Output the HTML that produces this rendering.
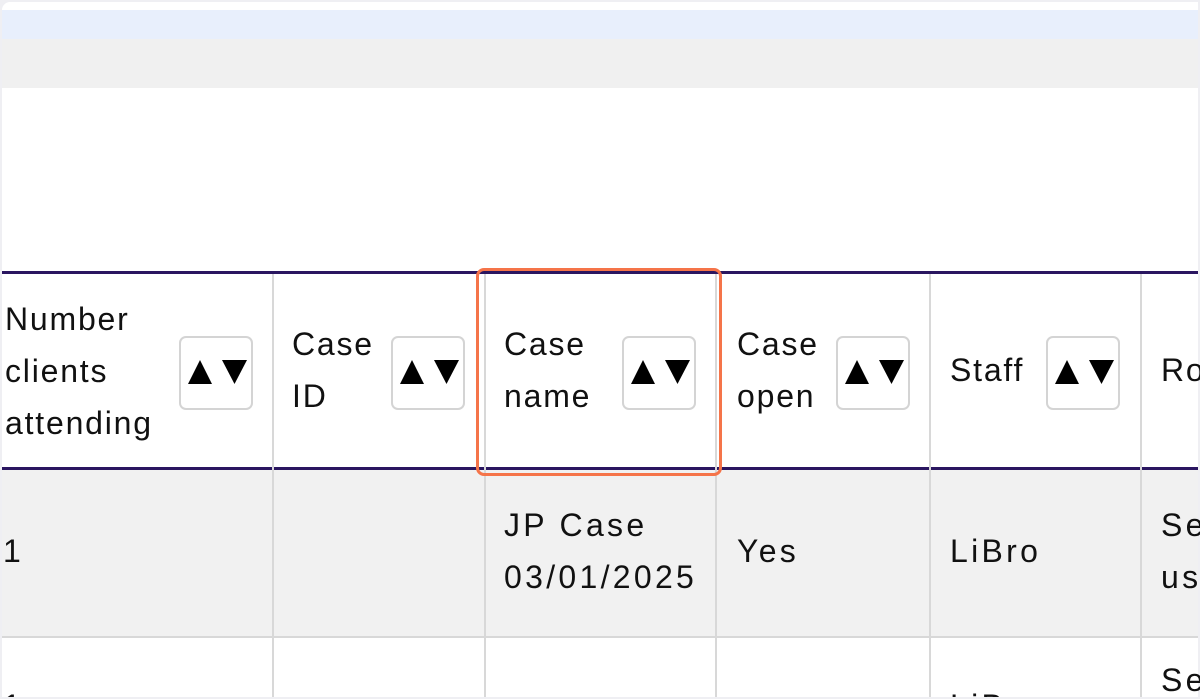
<!DOCTYPE html>
<html><head><meta charset="utf-8"><style>
html,body{margin:0;padding:0;width:1200px;height:699px;overflow:hidden}
body{position:relative;background:#efeff3;font-family:"Liberation Sans",sans-serif;color:#111}
#c{position:absolute;left:2px;top:2px;width:1196px;height:695px;background:#fff;border-radius:8px 0 0 0;overflow:hidden}
.a{position:absolute}
.t{position:absolute;font-size:32px;line-height:52px;white-space:nowrap;letter-spacing:1.8px}
.b{position:absolute;font-size:32px;line-height:52px;white-space:nowrap;letter-spacing:3.3px}
.btn{position:absolute;width:70px;height:70px;border:2px solid #d4d4d4;border-radius:7px;background:#fff}
.vl{position:absolute;width:2px;background:#d8d8d8}
#clip{position:absolute;left:0;top:0;width:1200px;height:697px;overflow:hidden}
</style></head><body>
<div id="c">
<div class="a" style="left:0;top:8px;width:1196px;height:29px;background:#e8effc"></div>
<div class="a" style="left:0;top:37px;width:1196px;height:49px;background:#f0f0f0"></div>
<div class="a" style="left:0;top:269px;width:1196px;height:3px;background:#2a1660"></div>
<div class="a" style="left:0;top:465px;width:1196px;height:3px;background:#2a1660"></div>
<div class="a" style="left:0;top:468px;width:1196px;height:166px;background:#f1f1f1"></div>
<div class="a" style="left:0;top:634px;width:1196px;height:2px;background:#d8d8d8"></div>
<div class="vl" style="left:270px;top:272px;height:423px"></div>
<div class="vl" style="left:482px;top:272px;height:423px"></div>
<div class="vl" style="left:713px;top:272px;height:423px"></div>
<div class="vl" style="left:927px;top:272px;height:423px"></div>
<div class="vl" style="left:1138px;top:272px;height:423px"></div>
</div>
<div id="clip">
<div class="t" style="left:5px;top:293px">Number<br>clients<br>attending</div>
<div class="t" style="left:292px;top:318px">Case<br>ID</div>
<div class="t" style="left:504px;top:318px">Case<br>name</div>
<div class="t" style="left:737px;top:318px">Case<br>open</div>
<div class="t" style="left:950px;top:344px">Staff</div>
<div class="t" style="left:1161px;top:344px">Ro</div>

<svg width="0" height="0" style="position:absolute"><defs><g id="ar"><polygon points="7,46 19,22 31,46" fill="#000"/><polygon points="41,22 66,22 53.5,46" fill="#000"/></g></defs></svg>
<div class="btn" style="left:179px;top:336px"><svg width="70" height="70" style="position:absolute;left:0;top:0"><use href="#ar"/></svg></div>
<div class="btn" style="left:391px;top:336px"><svg width="70" height="70" style="position:absolute;left:0;top:0"><use href="#ar"/></svg></div>
<div class="btn" style="left:622px;top:336px"><svg width="70" height="70" style="position:absolute;left:0;top:0"><use href="#ar"/></svg></div>
<div class="btn" style="left:836px;top:336px"><svg width="70" height="70" style="position:absolute;left:0;top:0"><use href="#ar"/></svg></div>
<div class="btn" style="left:1046px;top:336px"><svg width="70" height="70" style="position:absolute;left:0;top:0"><use href="#ar"/></svg></div>

<div class="b" style="left:3px;top:525px">1</div>
<div class="b" style="left:504px;top:499px">JP Case<br>03/01/2025</div>
<div class="b" style="left:737px;top:525px">Yes</div>
<div class="b" style="left:950px;top:525px">LiBro</div>
<div class="b" style="left:1161px;top:499px">Se<br>us</div>
<div class="b" style="left:3px;top:680px">1</div>
<div class="b" style="left:950px;top:680px">LiBro</div>
<div class="b" style="left:1161px;top:654px">Se</div>
<div class="a" style="left:476px;top:268px;width:240px;height:202px;border:3px solid #f57449;border-radius:8px"></div>
</div>
<div class="a" style="left:0;top:697px;width:1200px;height:2px;background:#efeff3"></div>
</body></html>
